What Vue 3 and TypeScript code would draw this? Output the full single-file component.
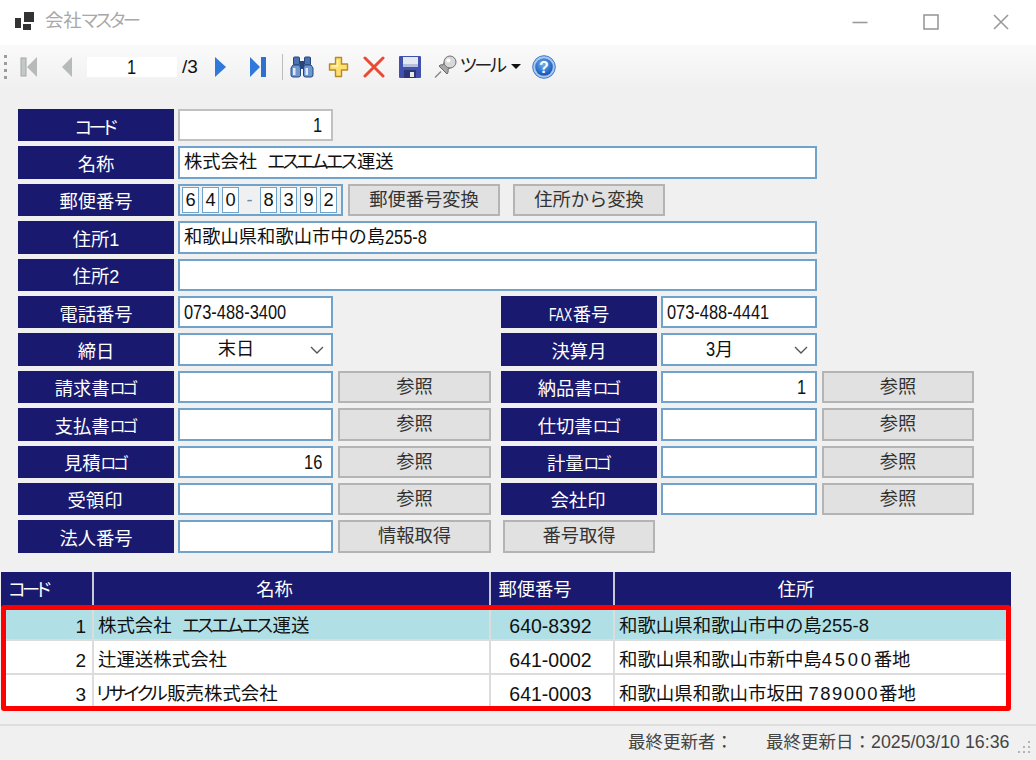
<script setup lang="ts">
interface Side { main: string; kana?: string; value: string; button: string }

const logoRows: { left: Side; right?: Side }[] = [
  { left: { main: '請求書', kana: 'ロゴ', value: '', button: '参照' }, right: { main: '納品書', kana: 'ロゴ', value: '1', button: '参照' } },
  { left: { main: '支払書', kana: 'ロゴ', value: '', button: '参照' }, right: { main: '仕切書', kana: 'ロゴ', value: '', button: '参照' } },
  { left: { main: '見積', kana: 'ロゴ', value: '16', button: '参照' }, right: { main: '計量', kana: 'ロゴ', value: '', button: '参照' } },
  { left: { main: '受領印', value: '', button: '参照' }, right: { main: '会社印', value: '', button: '参照' } },
]

const zipHead = ['6', '4', '0']
const zipTail = ['8', '3', '9', '2']
</script>

<template>
  <div class="window">
    <header class="titlebar">
      <svg class="app-icon" width="19" height="19" viewBox="0 0 19 19">
        <rect x="0" y="6" width="6" height="10" fill="#333" />
        <rect x="9" y="0" width="10" height="10" fill="#333" />
        <rect x="8" y="12" width="8" height="6" fill="#333" />
      </svg>
      <span class="title">会社<span class="kana">マスター</span></span>
      <div class="win-controls">
        <svg width="16" height="16" viewBox="0 0 16 16"><path d="M0.500 8.500h15" stroke="#9a9a9a" stroke-width="1.600" /></svg>
        <svg width="16" height="16" viewBox="0 0 16 16"><rect x="1" y="1" width="14" height="14" fill="none" stroke="#9a9a9a" stroke-width="1.600" /></svg>
        <svg width="16" height="16" viewBox="0 0 16 16"><path d="M1 1l14 14M15 1L1 15" stroke="#9a9a9a" stroke-width="1.600" /></svg>
      </div>
    </header>

    <nav class="toolbar">
      <div class="grip"><i /><i /><i /><i /></div>
      <svg class="t-first" width="17" height="20" viewBox="0 0 17 20">
        <rect x="1" y="1" width="5" height="18" fill="#c4c8c6" stroke="#a4a8a6" />
        <path d="M17 0v20L7 10z" fill="#b6bab8" />
      </svg>
      <svg class="t-prev" width="10" height="20" viewBox="0 0 10 20"><path d="M10 0v20L0 10z" fill="#b6bab8" /></svg>
      <div class="t-page"><span class="squeeze mid">1</span></div>
      <span class="t-total">/3</span>
      <svg class="t-next" width="11" height="20" viewBox="0 0 11 20"><path d="M0 0v20l11-10z" fill="#2f78dc" /></svg>
      <svg class="t-last" width="16" height="20" viewBox="0 0 16 20">
        <path d="M0 0v20l10-10z" fill="#2f78dc" />
        <rect x="11" y="0" width="5" height="20" fill="#2f6fd0" />
      </svg>
      <div class="t-sep" />
      <svg class="t-find" width="24" height="22" viewBox="0 0 24 22">
        <rect x="3.500" y="1" width="6" height="8" rx="1" fill="#4a72b0" stroke="#24457e" />
        <rect x="14.500" y="1" width="6" height="8" rx="1" fill="#4a72b0" stroke="#24457e" />
        <rect x="10" y="5" width="4" height="8" fill="#24457e" />
        <path d="M3 9h6.500l1 3v7a2 2 0 0 1-2 2H3a2 2 0 0 1-2-2v-7z" fill="#6f97cf" stroke="#24457e" />
        <path d="M14.500 9H21l2 3v7a2 2 0 0 1-2 2h-5.500a2 2 0 0 1-2-2v-7z" fill="#6f97cf" stroke="#24457e" />
        <rect x="3" y="12" width="2.500" height="7" fill="#dfeaf8" />
        <rect x="15.500" y="12" width="2.500" height="7" fill="#dfeaf8" />
      </svg>
      <svg class="t-add" width="21" height="22" viewBox="0 0 21 22">
        <path d="M7.500 1.500h6v6.500h6v6h-6v6.500h-6v-6.500h-6v-6h6z" fill="#ffdf70" stroke="#b58a22" stroke-width="1.400" stroke-linejoin="round" />
        <path d="M9.500 4v6H4" fill="none" stroke="#fff6cf" stroke-width="1.300" />
      </svg>
      <svg class="t-del" width="22" height="22" viewBox="0 0 22 22">
        <path d="M2 2c6 6 12 12 18 18M20 2C14 8 8 14 2 20" fill="none" stroke="#ea4a32" stroke-width="3" stroke-linecap="round" />
      </svg>
      <svg class="t-save" width="22" height="22" viewBox="0 0 22 22">
        <rect width="22" height="22" rx="1" fill="#4050ac" />
        <rect x="4" y="1" width="15" height="10" fill="#e4e8f0" />
        <rect x="4" y="8" width="15" height="3" fill="#b4bedd" />
        <rect x="5" y="14" width="12" height="8" fill="#2a3676" />
        <rect x="11" y="16" width="4" height="5" fill="#e8e8e8" />
      </svg>
      <svg class="t-pin" width="25" height="24" viewBox="0 0 25 24">
        <path d="M2 22.500l6-6" stroke="#888" stroke-width="1.500" />
        <path d="M6 11l8 8c1-1 1.500-3 1-5l4-2-7-6-2 4c-2-.5-3 0-4 1z" fill="#a8a8a8" stroke="#666" />
        <circle cx="17" cy="7" r="6" fill="#d8d8d8" stroke="#707070" />
        <circle cx="15.500" cy="5.500" r="2" fill="#fff" />
      </svg>
      <span class="t-tools"><span class="kana">ツール</span></span>
      <span class="t-caret" />
      <svg class="t-help" width="24" height="24" viewBox="0 0 24 24">
        <defs>
          <radialGradient id="helpGrad" cx="45%" cy="35%" r="65%">
            <stop offset="0" stop-color="#6db2f4" />
            <stop offset="1" stop-color="#1452b8" />
          </radialGradient>
        </defs>
        <circle cx="12" cy="12" r="11.300" fill="#a8c8ec" stroke="#3f78c6" />
        <circle cx="12" cy="12" r="8.800" fill="url(#helpGrad)" />
        <text x="12" y="17.500" text-anchor="middle" font-family="Liberation Sans" font-weight="700" font-size="16" fill="#fff">?</text>
      </svg>
    </nav>

    <main class="form">
      <div class="label"><span class="kana">コード</span></div>
      <div class="field readonly num-right"><span class="squeeze">1</span></div>
      <div class="rest" />

      <div class="label">名称</div>
      <div class="field wide">株式会社&nbsp;&nbsp;<span class="kana">エスエムエス</span>運送</div>
      <div class="rest" />

      <div class="label">郵便番号</div>
      <div class="zip-row">
        <div class="zip">
          <span v-for="(d, i) in zipHead" :key="'h' + i" class="digit">{{ d }}</span>
          <span class="dash">-</span>
          <span v-for="(d, i) in zipTail" :key="'t' + i" class="digit">{{ d }}</span>
        </div>
        <button class="btn zip-btn">郵便番号変換</button>
        <button class="btn zip-btn second">住所から変換</button>
      </div>

      <div class="label">住所<span class="lat">1</span></div>
      <div class="field wide">和歌山県和歌山市中の島<span class="squeeze">255-8</span></div>
      <div class="rest" />

      <div class="label">住所<span class="lat">2</span></div>
      <div class="field wide" />
      <div class="rest" />

      <div class="label">電話番号</div>
      <div class="field"><span class="squeeze">073-488-3400</span></div>
      <div />
      <div class="label second-label"><span class="fax">FAX</span>番号</div>
      <div class="field"><span class="squeeze">073-488-4441</span></div>
      <div />

      <div class="label">締日</div>
      <div class="field select">
        <span class="select-text">末日</span>
        <svg width="14" height="8" viewBox="0 0 14 8"><path d="M1 1l6 6 6-6" fill="none" stroke="#555" stroke-width="1.400" /></svg>
      </div>
      <div />
      <div class="label second-label">決算月</div>
      <div class="field select">
        <span class="select-text"><span class="squeeze month">3</span>月</span>
        <svg width="14" height="8" viewBox="0 0 14 8"><path d="M1 1l6 6 6-6" fill="none" stroke="#555" stroke-width="1.400" /></svg>
      </div>
      <div />

      <template v-for="row in logoRows" :key="row.left.main">
        <div class="label">{{ row.left.main }}<span class="kana small">{{ row.left.kana }}</span></div>
        <div class="field num-right"><span class="squeeze">{{ row.left.value }}</span></div>
        <button class="btn side">{{ row.left.button }}</button>
        <div class="label second-label">{{ row.right?.main }}<span class="kana small">{{ row.right?.kana }}</span></div>
        <div class="field num-right"><span class="squeeze">{{ row.right?.value }}</span></div>
        <button class="btn side">{{ row.right?.button }}</button>
      </template>

      <div class="label">法人番号</div>
      <div class="field" />
      <button class="btn side">情報取得</button>
      <button class="btn number-btn">番号取得</button>
    </main>

    <section class="table">
      <div class="thead">
        <div class="th"><span class="kana">コード</span></div>
        <div class="th">名称</div>
        <div class="th">郵便番号</div>
        <div class="th">住所</div>
      </div>
      <div class="tr selected">
        <div class="td code">1</div>
        <div class="td">株式会社&nbsp;&nbsp;<span class="kana">エスエムエス</span>運送</div>
        <div class="td zipc">640-8392</div>
        <div class="td">和歌山県和歌山市中の島255-8</div>
      </div>
      <div class="tr">
        <div class="td code">2</div>
        <div class="td">辻運送株式会社</div>
        <div class="td zipc">641-0002</div>
        <div class="td">和歌山県和歌山市新中島<span class="wide-num">4500</span>番地</div>
      </div>
      <div class="tr">
        <div class="td code">3</div>
        <div class="td tight"><span class="kana">リサイクル</span>販売株式会社</div>
        <div class="td zipc">641-0003</div>
        <div class="td">和歌山県和歌山市坂田 <span class="wide-num2">789000</span>番地</div>
      </div>
      <div class="marker" />
    </section>

    <footer class="status">
      <span>最終更新者：</span>
      <span class="updated">最終更新日：<span class="stamp">2025/03/10 16:36</span></span>
      <svg class="size-grip" width="14" height="16" viewBox="0 0 14 16">
        <g fill="#b4b4b4">
          <rect x="10" y="2" width="2" height="2" />
          <rect x="5" y="7" width="2" height="2" />
          <rect x="10" y="7" width="2" height="2" />
          <rect x="0" y="12" width="2" height="2" />
          <rect x="5" y="12" width="2" height="2" />
          <rect x="10" y="12" width="2" height="2" />
        </g>
      </svg>
    </footer>
  </div>
</template>

<style>
html, body { margin: 0; background: #f0f0f0; }
</style>

<style scoped>
* { box-sizing: border-box; }

.window {
  width: 1036px;
  height: 760px;
  overflow: hidden;
  display: flex;
  flex-direction: column;
  background: #f0f0f0;
  color: #111;
  font-family: "Liberation Sans", "Noto Sans CJK JP", sans-serif;
  font-size: 18.300px;
  line-height: 1;
}

.kana { font-feature-settings: "palt" 1; letter-spacing: -2.500px; margin-right: 2px; }
.label .kana, .th .kana { letter-spacing: -3.500px; margin-right: 3px; }
.label .kana.small { font-size: 16px; letter-spacing: -2.500px; margin-right: 2px; }
.lat { font-size: 18px; }
.squeeze {
  display: inline-block;
  font-size: 20px;
  transform: scaleX(0.82);
  transform-origin: left center;
}
.squeeze.mid { transform-origin: center; }
.squeeze.month { margin-right: -2px; }
.num-right .squeeze { transform-origin: right center; }
.fax {
  display: inline-block;
  width: 24px;
  font-size: 18px;
  white-space: nowrap;
  transform: scaleX(0.68);
  transform-origin: left center;
}

/* title bar */
.titlebar {
  height: 45px;
  flex: none;
  display: flex;
  align-items: center;
  background: #fff;
  padding-left: 15px;
}
.app-icon { margin-top: -3px; flex: none; }
.title { margin-left: 11px; color: #a8a8a8; margin-top: -2px; }
.win-controls {
  margin-left: auto;
  display: flex;
  gap: 54.500px;
  margin-right: 27px;
  margin-top: -1px;
}

/* toolbar */
.toolbar {
  height: 45px;
  flex: none;
  display: flex;
  align-items: center;
  padding-bottom: 2px;
  background: linear-gradient(#fafafa, #f0f0f0);
}
.toolbar svg { flex: none; }
.grip { margin-left: 4px; width: 3px; display: flex; flex-direction: column; gap: 4px; }
.grip i { display: block; width: 3px; height: 3px; background: #9c9c9c; }
.t-first { margin-left: 13px; }
.t-prev { margin-left: 25px; }
.t-page {
  margin-left: 15px;
  width: 90px;
  height: 20px;
  background: #fff;
  text-align: center;
  line-height: 20px;
}
.t-total { margin-left: 5px; width: 18px; font-size: 19px; }
.t-next { margin-left: 15px; }
.t-last { margin-left: 24px; }
.t-sep { margin-left: 16px; width: 1px; height: 26px; background: #bcbcbc; }
.t-find { margin-left: 7px; }
.t-add { margin-left: 14px; }
.t-del { margin-left: 14px; }
.t-save { margin-left: 14px; }
.t-pin { margin-left: 12px; }
.t-tools { margin-left: 2px; width: 45px; white-space: nowrap; color: #222; }
.t-caret {
  margin-left: 6px;
  width: 0;
  height: 0;
  border-left: 5px solid transparent;
  border-right: 5px solid transparent;
  border-top: 5px solid #111;
}
.t-help { margin-left: 11px; }

/* form */
.form {
  flex: none;
  margin: 19px 0 0 18px;
  display: grid;
  grid-template-columns: 156px 155px 154px 162px 156px 153px;
  grid-auto-rows: 32.400px;
  column-gap: 4px;
  row-gap: 5px;
}
.label {
  background: #191970;
  color: #fff;
  display: flex;
  align-items: center;
  justify-content: center;
  padding-top: 5px;
  white-space: nowrap;
}
.second-label { margin-left: 6px; }
.field {
  background: #fff;
  border: 2px solid #6fa3cc;
  padding: 0 4px;
  display: flex;
  align-items: center;
  white-space: nowrap;
}
.field.readonly { border-color: #c0c0c0; }
.field.wide { grid-column: 2 / 6; }
.num-right { justify-content: flex-end; padding-right: 9px; }
.rest { grid-column: 6 / 7; }
.select { padding: 0 7px 0 0; }
.select-text { flex: 1; text-align: center; padding-right: 18px; }
.btn {
  background: #e1e1e1;
  border: 2px solid #b4b4b4;
  color: #333;
  font: inherit;
  padding: 0;
  cursor: default;
  white-space: nowrap;
}
.side { margin-left: 1px; }
.number-btn { margin-left: 8px; width: 152px; }

.zip-row { grid-column: 2 / 7; display: flex; align-items: stretch; }
.zip {
  width: 165px;
  flex: none;
  border: 2px solid #6fa3cc;
  display: flex;
  align-items: center;
  gap: 3px;
  padding-left: 2px;
  background: #f0f0f0;
}
.digit {
  width: 17px;
  height: 26px;
  background: #fff;
  border: 1px solid #6fa3cc;
  display: flex;
  align-items: center;
  justify-content: center;
}
.dash { width: 15px; text-align: center; font-size: 18px; color: #5f8fb8; background: #f0f0f0; }
.zip-btn { margin-left: 5px; width: 152px; }
.zip-btn.second { margin-left: 13px; }

/* table */
.table { position: relative; margin: 19px 0 0 1px; width: 1010px; height: 139px; overflow: hidden; flex: none; }
.thead, .tr {
  display: grid;
  grid-template-columns: 93px 397px 124px 1fr;
}
.thead { height: 35px; background: #191970; color: #fff; }
.th {
  display: flex;
  align-items: center;
  justify-content: center;
  padding: 2px 34px 0 0;
  border-right: 2px solid #c9c9d6;
  white-space: nowrap;
}
.th:last-child { border-right: 0; }
.tr { height: 34px; background: #fff; border-bottom: 2px solid #dcdcdc; }
.tr.selected { background: #b0e0e6; }
.td {
  display: flex;
  align-items: center;
  padding: 8px 0 0 4px;
  border-right: 2px solid #dcdcdc;
  white-space: pre;
  font-size: 18.450px;
}
.td:last-child { border-right: 0; }
.td.code { justify-content: flex-end; padding: 8px 6px 0 0; font-size: 19px; }
.td.zipc { justify-content: center; padding: 8px 3px 0 0; font-size: 19.500px; }
.td.tight { padding-left: 2px; }
.wide-num { letter-spacing: 2.700px; }
.wide-num2 { letter-spacing: 1.500px; }
.marker {
  position: absolute;
  left: 0;
  top: 33px;
  width: 1010px;
  height: 106px;
  border: 5px solid #ff0000;
  border-radius: 3px;
  pointer-events: none;
}

/* status */
.status {
  margin-top: 13px;
  flex: 1;
  border-top: 2px solid #dedede;
  display: flex;
  align-items: center;
  padding-left: 628px;
  font-size: 17.500px;
  color: #444;
  white-space: nowrap;
}
.updated { margin-left: 33px; }
.stamp { font-size: 17.800px; }
.size-grip { margin-left: 9px; margin-top: 8px; }
</style>
